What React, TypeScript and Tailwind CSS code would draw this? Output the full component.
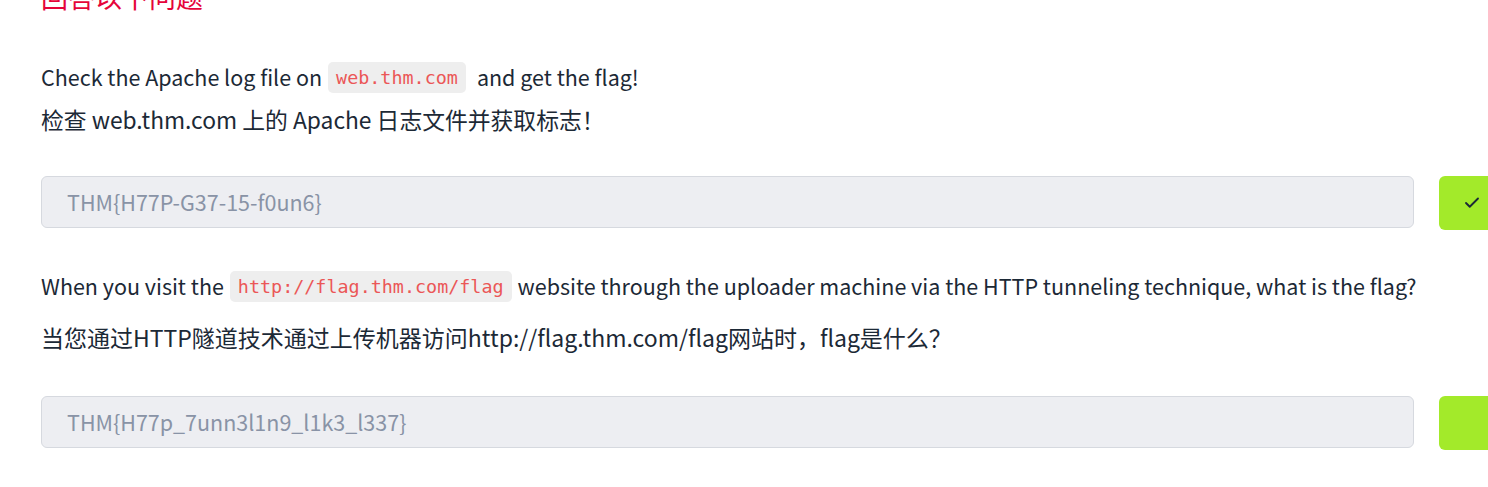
import { Check } from "lucide-react";

const sans = "font-['Noto_Sans_CJK_SC','Noto_Sans',sans-serif]";
const mono = "font-['DejaVu_Sans_Mono','Liberation_Mono',monospace]";

function Code({ children }: { children: string }) {
  return (
    <code
      className={`${mono} inline-block h-[31px] rounded-[5px] bg-[#eeeeee] px-[8px] text-[18.4px] leading-[31px] text-[#eb5757] align-middle`}
    >
      {children}
    </code>
  );
}

function FlagRow({ value, icon }: { value: string; icon?: boolean }) {
  return (
    <div className="flex items-start gap-[25px]">
      <div className="flex h-[52px] w-[1373px] shrink-0 items-center rounded-[6px] border border-[#d6d9df] bg-[#edeef2] px-[25px] text-[21.5px] text-[#8993a6]">
        {value}
      </div>
      <button className="flex h-[54px] w-[66px] shrink-0 items-center justify-center rounded-[6px] bg-[#a3ea2a] text-[#1c2936]">
        {icon && <Check size={18} strokeWidth={2.5} />}
      </button>
    </div>
  );
}

export default function App() {
  return (
    <div
      className={`${sans} h-[487px] w-[1488px] overflow-hidden bg-white pl-[41px] text-[#1c2936]`}
    >
      <h2 className="-mt-[18px] h-[79px] text-[27px] leading-[30px] text-[#e5053a]">
        回答以下问题
      </h2>

      <section>
        <p className="flex h-[32px] items-center gap-[6px] text-[21.5px]">
          <span>Check the Apache log file on</span>
          <Code>web.thm.com</Code>
          <span className="ml-[5px]">and get the flag!</span>
        </p>
        <p className="mt-[11px] h-[32px] text-[22.8px] leading-[32px]">
          检查 web.thm.com 上的 Apache 日志文件并获取标志！
        </p>
        <div className="mt-[40px]">
          <FlagRow value="THM{H77P-G37-15-f0un6}" icon />
        </div>
      </section>

      <section className="mt-[40px]">
        <p className="flex h-[32px] items-center gap-[6px] text-[21.5px]">
          <span>When you visit the</span>
          <Code>http://flag.thm.com/flag</Code>
          <span>
            website through the uploader machine via the HTTP tunneling
            technique, what is the flag?
          </span>
        </p>
        <p className="mt-[19px] h-[32px] text-[23px] leading-[32px]">
          当您通过HTTP隧道技术通过上传机器访问http://flag.thm.com/flag网站时，flag是什么？
        </p>
        <div className="mt-[43px]">
          <FlagRow value="THM{H77p_7unn3l1n9_l1k3_l337}" />
        </div>
      </section>
    </div>
  );
}
